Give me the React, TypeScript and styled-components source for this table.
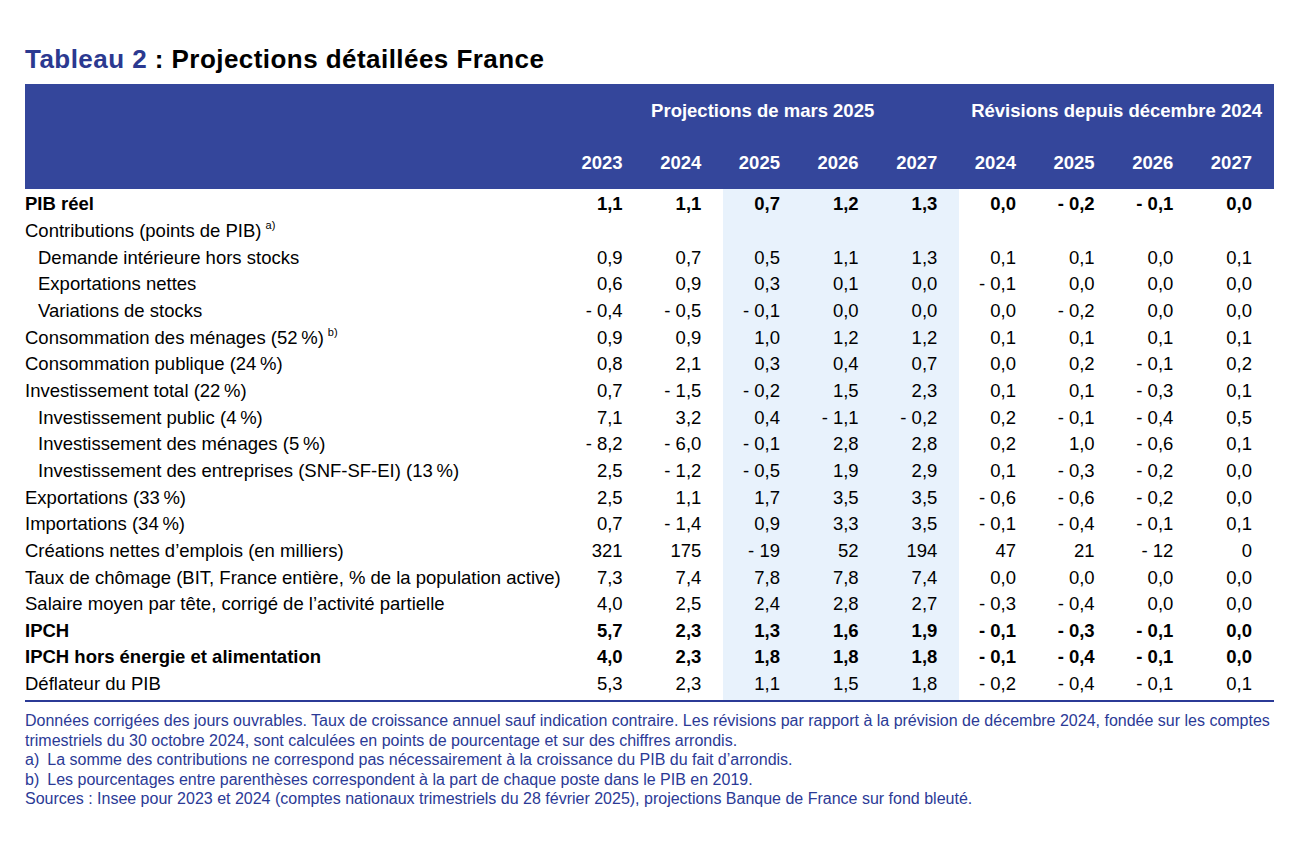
import React from "react";
import styled, { createGlobalStyle } from "styled-components";

const GlobalStyle = createGlobalStyle`
  html, body {
    margin: 0;
    padding: 0;
    background: #ffffff;
  }
  body {
    font-family: "Liberation Sans", Arial, Helvetica, sans-serif;
    color: #000000;
  }
`;

const BLUE = "#34469b";
const NAVY = "#2b3a96";
const SHADE = "#e8f2fc";
const COLS = "541px repeat(9, 1fr)";

const Page = styled.div`
  width: 1249px;
  padding: 45px 0 0 25px;
`;

const Title = styled.h1`
  margin: 0 0 10px 0;
  font-size: 26px;
  line-height: 29px;
  font-weight: 700;
  letter-spacing: 0.45px;
  color: #000000;
`;

const TitleNum = styled.span`
  color: #2b3990;
`;

const HeaderBand = styled.div`
  background: ${BLUE};
  color: #ffffff;
  font-weight: 700;
  font-size: 18.5px;
`;

const HeaderRow = styled.div<{ $h: number }>`
  display: grid;
  grid-template-columns: ${COLS};
  height: ${(p) => p.$h}px;
  align-items: center;
`;

const GroupHead = styled.div<{ $span: number }>`
  grid-column: span ${(p) => p.$span};
  text-align: center;
  white-space: nowrap;
`;

const YearHead = styled.div`
  text-align: right;
  padding-right: 22px;
`;

const Body = styled.div`
  display: flex;
  flex-direction: column;
`;

const Row = styled.div`
  display: grid;
  grid-template-columns: ${COLS};
  height: 26.67px;
  font-size: 18.5px;
`;

const Label = styled.div<{ $indent?: boolean; $bold?: boolean }>`
  display: flex;
  align-items: center;
  padding-left: ${(p) => (p.$indent ? 13 : 0)}px;
  font-weight: ${(p) => (p.$bold ? 700 : 400)};
  white-space: nowrap;
`;

const Sup = styled.span`
  font-size: 11px;
  margin-left: 4px;
  position: relative;
  top: -6px;
`;

const Value = styled.div<{ $shaded?: boolean; $bold?: boolean }>`
  display: flex;
  align-items: center;
  justify-content: flex-end;
  padding-right: 22px;
  background: ${(p) => (p.$shaded ? SHADE : "transparent")};
  font-weight: ${(p) => (p.$bold ? 700 : 400)};
  white-space: nowrap;
`;

const PadRow = styled.div<{ $h: number }>`
  display: grid;
  grid-template-columns: ${COLS};
  height: ${(p) => p.$h}px;
`;

const PadCell = styled.div<{ $shaded?: boolean }>`
  background: ${(p) => (p.$shaded ? SHADE : "transparent")};
`;

const Rule = styled.div`
  height: 2px;
  background: ${NAVY};
`;

const Notes = styled.div`
  margin-top: 9px;
  color: ${NAVY};
  font-size: 16px;
  line-height: 19.5px;
`;

const NoteLine = styled.div`
  white-space: nowrap;
`;

const NoteTag = styled.span`
  margin-right: 8px;
`;

type RowData = {
  label: string;
  sup?: string;
  indent?: boolean;
  bold?: boolean;
  values?: string[];
};

const N = "\u202F";

const rows: RowData[] = [
  { label: "PIB réel", bold: true, values: ["1,1", "1,1", "0,7", "1,2", "1,3", "0,0", "- 0,2", "- 0,1", "0,0"] },
  { label: "Contributions (points de PIB)", sup: "a)" },
  { label: "Demande intérieure hors stocks", indent: true, values: ["0,9", "0,7", "0,5", "1,1", "1,3", "0,1", "0,1", "0,0", "0,1"] },
  { label: "Exportations nettes", indent: true, values: ["0,6", "0,9", "0,3", "0,1", "0,0", "- 0,1", "0,0", "0,0", "0,0"] },
  { label: "Variations de stocks", indent: true, values: ["- 0,4", "- 0,5", "- 0,1", "0,0", "0,0", "0,0", "- 0,2", "0,0", "0,0"] },
  { label: `Consommation des ménages (52${N}%)`, sup: "b)", values: ["0,9", "0,9", "1,0", "1,2", "1,2", "0,1", "0,1", "0,1", "0,1"] },
  { label: `Consommation publique (24${N}%)`, values: ["0,8", "2,1", "0,3", "0,4", "0,7", "0,0", "0,2", "- 0,1", "0,2"] },
  { label: `Investissement total (22${N}%)`, values: ["0,7", "- 1,5", "- 0,2", "1,5", "2,3", "0,1", "0,1", "- 0,3", "0,1"] },
  { label: `Investissement public (4${N}%)`, indent: true, values: ["7,1", "3,2", "0,4", "- 1,1", "- 0,2", "0,2", "- 0,1", "- 0,4", "0,5"] },
  { label: `Investissement des ménages (5${N}%)`, indent: true, values: ["- 8,2", "- 6,0", "- 0,1", "2,8", "2,8", "0,2", "1,0", "- 0,6", "0,1"] },
  { label: `Investissement des entreprises (SNF-SF-EI) (13${N}%)`, indent: true, values: ["2,5", "- 1,2", "- 0,5", "1,9", "2,9", "0,1", "- 0,3", "- 0,2", "0,0"] },
  { label: `Exportations (33${N}%)`, values: ["2,5", "1,1", "1,7", "3,5", "3,5", "- 0,6", "- 0,6", "- 0,2", "0,0"] },
  { label: `Importations (34${N}%)`, values: ["0,7", "- 1,4", "0,9", "3,3", "3,5", "- 0,1", "- 0,4", "- 0,1", "0,1"] },
  { label: "Créations nettes d’emplois (en milliers)", values: ["321", "175", "- 19", "52", "194", "47", "21", "- 12", "0"] },
  { label: "Taux de chômage (BIT, France entière, % de la population active)", values: ["7,3", "7,4", "7,8", "7,8", "7,4", "0,0", "0,0", "0,0", "0,0"] },
  { label: "Salaire moyen par tête, corrigé de l’activité partielle", values: ["4,0", "2,5", "2,4", "2,8", "2,7", "- 0,3", "- 0,4", "0,0", "0,0"] },
  { label: "IPCH", bold: true, values: ["5,7", "2,3", "1,3", "1,6", "1,9", "- 0,1", "- 0,3", "- 0,1", "0,0"] },
  { label: "IPCH hors énergie et alimentation", bold: true, values: ["4,0", "2,3", "1,8", "1,8", "1,8", "- 0,1", "- 0,4", "- 0,1", "0,0"] },
  { label: "Déflateur du PIB", values: ["5,3", "2,3", "1,1", "1,5", "1,8", "- 0,2", "- 0,4", "- 0,1", "0,1"] },
];

const years = ["2023", "2024", "2025", "2026", "2027", "2024", "2025", "2026", "2027"];
const isShaded = (i: number) => i >= 2 && i <= 4;

const ShadedPad = ({ h }: { h: number }) => (
  <PadRow $h={h}>
    <PadCell />
    {Array.from({ length: 9 }).map((_, i) => (
      <PadCell key={i} $shaded={isShaded(i)} />
    ))}
  </PadRow>
);

export default function App() {
  return (
    <>
      <GlobalStyle />
      <Page>
        <Title>
          <TitleNum>Tableau 2</TitleNum> : Projections détaillées France
        </Title>
        <HeaderBand>
          <HeaderRow $h={53}>
            <div />
            <GroupHead $span={5}>Projections de mars 2025</GroupHead>
            <GroupHead $span={4}>Révisions depuis décembre 2024</GroupHead>
          </HeaderRow>
          <HeaderRow $h={52}>
            <div />
            {years.map((y, i) => (
              <YearHead key={i}>{y}</YearHead>
            ))}
          </HeaderRow>
        </HeaderBand>
        <Body>
          <ShadedPad h={2} />
          {rows.map((r, ri) => (
            <Row key={ri}>
              <Label $indent={r.indent} $bold={r.bold}>
                {r.label}
                {r.sup && <Sup>{r.sup}</Sup>}
              </Label>
              {Array.from({ length: 9 }).map((_, i) => (
                <Value key={i} $shaded={isShaded(i)} $bold={r.bold}>
                  {r.values ? r.values[i] : ""}
                </Value>
              ))}
            </Row>
          ))}
          <ShadedPad h={3} />
        </Body>
        <Rule />
        <Notes>
          <NoteLine>
            Données corrigées des jours ouvrables. Taux de croissance annuel sauf indication contraire. Les révisions par rapport à la prévision de décembre 2024, fondée sur les comptes
          </NoteLine>
          <NoteLine>
            trimestriels du 30 octobre 2024, sont calculées en points de pourcentage et sur des chiffres arrondis.
          </NoteLine>
          <NoteLine>
            <NoteTag>a)</NoteTag>La somme des contributions ne correspond pas nécessairement à la croissance du PIB du fait d’arrondis.
          </NoteLine>
          <NoteLine>
            <NoteTag>b)</NoteTag>Les pourcentages entre parenthèses correspondent à la part de chaque poste dans le PIB en 2019.
          </NoteLine>
          <NoteLine>
            Sources : Insee pour 2023 et 2024 (comptes nationaux trimestriels du 28 février 2025), projections Banque de France sur fond bleuté.
          </NoteLine>
        </Notes>
      </Page>
    </>
  );
}
